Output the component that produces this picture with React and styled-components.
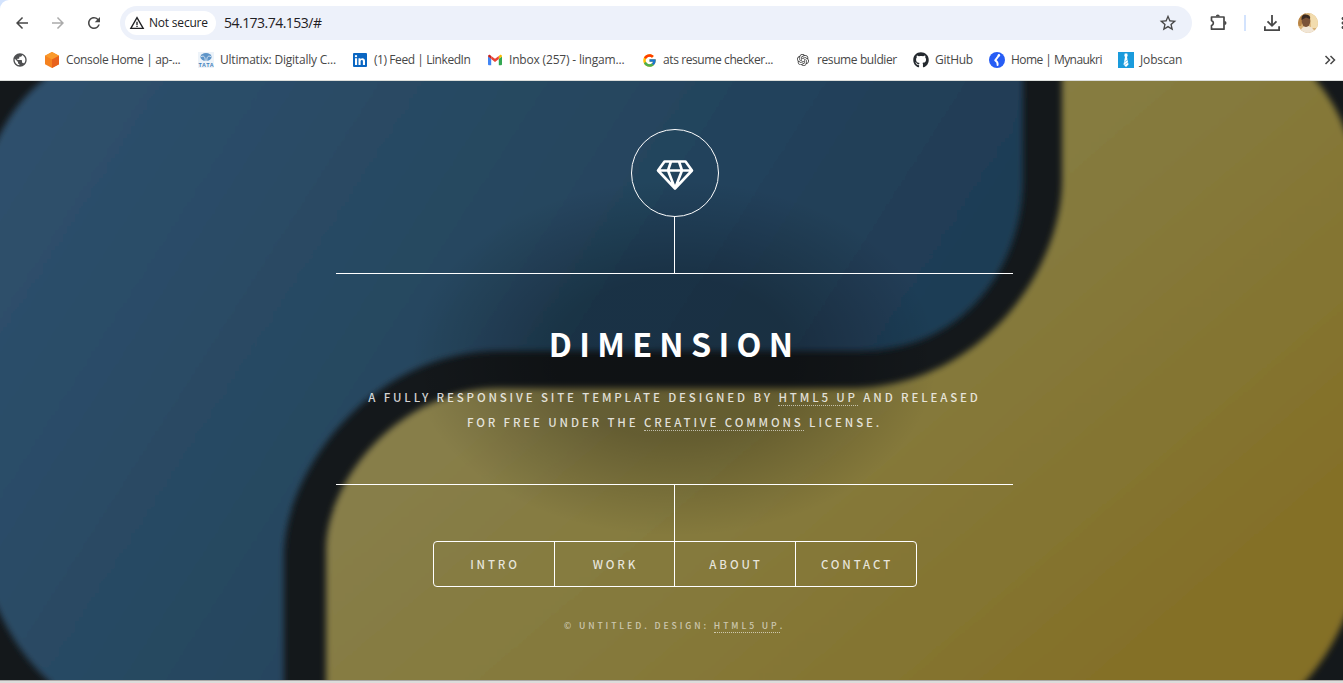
import React from "react";
import styled, { createGlobalStyle } from "styled-components";
import {
  MdArrowBack,
  MdArrowForward,
  MdRefresh,
  MdStarOutline,
  MdMoreVert,
  MdPublic,
  MdWarningAmber,
} from "react-icons/md";
import { FaGithub } from "react-icons/fa";
import { FcGoogle } from "react-icons/fc";
import { SiOpenai } from "react-icons/si";

const GlobalStyle = createGlobalStyle`
  * { box-sizing: border-box; }
  html, body { margin: 0; overflow: hidden; background: #fff; }
  a { color: inherit; text-decoration: none; }
`;

const Window = styled.div`
  width: 1349px;
  height: 683px;
  display: flex;
  flex-direction: column;
  overflow: hidden;
  font-family: "Open Sans", "Noto Sans", sans-serif;
`;

const Chrome = styled.div`
  height: 81px;
  flex: none;
  background: #d3e3fd;
`;

const ChromeSurface = styled.div`
  height: 81px;
  background: #fff;
  border-top-left-radius: 9px;
  border-bottom: 1px solid #dcdedb;
`;

const Toolbar = styled.div`
  height: 40px;
  padding: 6px 0 0 12px;
  display: flex;
  align-items: center;
  color: #474747;
`;

const ToolButton = styled.span`
  display: flex;
  flex: none;
  width: 20px;
  height: 20px;
  align-items: center;
  justify-content: center;
  margin-right: ${(p) => p.$after || 0}px;
  color: ${(p) => (p.$disabled ? "#ababab" : "#474747")};
  font-size: ${(p) => p.$size || 18}px;
`;

const AddressBar = styled.div`
  width: 1072px;
  height: 34px;
  flex: none;
  padding: 0 14px 0 5px;
  border-radius: 17px;
  background: #edf1fa;
  display: flex;
  align-items: center;
  margin-right: 16px;
`;

const SecurityChip = styled.div`
  width: 91px;
  height: 24px;
  padding: 0 0 1px 4px;
  border-radius: 12px;
  background: #fff;
  display: flex;
  align-items: center;
  gap: 4px;
  font-size: 12px;
  font-weight: 500;
  letter-spacing: -0.2px;
  white-space: nowrap;
  color: #202124;
  svg { font-size: 16px; flex: none; }
`;

const Address = styled.span`
  flex: 1;
  margin-left: 8px;
  font-size: 14px;
  line-height: 18px;
  padding-bottom: 1px;
  letter-spacing: -0.52px;
  color: #1f2023;
`;

const ToolDivider = styled.span`
  width: 2px;
  height: 16px;
  flex: none;
  margin-right: 16px;
  background: #d3e3fd;
`;

const Avatar = styled.svg`
  width: 20px;
  height: 20px;
  flex: none;
  margin-right: 15px;
`;

const BookmarkBar = styled.nav`
  height: 40px;
  padding: 0 13px 0 12px;
  display: flex;
  align-items: center;
`;

const Bookmark = styled.a`
  width: ${(p) => p.$width}px;
  flex: none;
  display: flex;
  align-items: center;
  gap: 6px;
  font-size: 12px;
  line-height: 16px;
  letter-spacing: ${(p) => p.$tracking || 0}px;
  white-space: nowrap;
  color: #474747;
`;

const BookmarkIcon = styled.span`
  width: 16px;
  height: 16px;
  flex: none;
  display: flex;
  align-items: center;
  justify-content: center;
`;

const Overflow = styled.svg`
  width: 12px;
  height: 12px;
  margin-left: auto;
`;

const Page = styled.main`
  height: 599px;
  flex: none;
  display: grid;
  font-family: "Noto Sans CJK JP", "Noto Sans", sans-serif;
  color: #fff;
  > * { grid-area: 1 / 1; }
`;

const Backdrop = styled.svg`
  width: 1343px;
  height: 599px;
  display: block;
`;

const Foreground = styled.div`
  z-index: 1;
  padding-top: 48px;
  display: flex;
  flex-direction: column;
  align-items: center;
`;

const Header = styled.header`
  width: 677px;
  height: 458px;
  display: flex;
  flex-direction: column;
  align-items: center;
  background: radial-gradient(rgba(0, 0, 0, 0.25) 25%, rgba(0, 0, 0, 0) 55%);
`;

const Logo = styled.div`
  width: 88px;
  height: 88px;
  flex: none;
  border: 1px solid #fff;
  border-radius: 50%;
  padding-top: 3px;
  display: flex;
  align-items: center;
  justify-content: center;
`;

const Stem = styled.div`
  width: 1px;
  height: 56px;
  flex: none;
  background: #fff;
`;

const Content = styled.div`
  width: 677px;
  height: 212px;
  flex: none;
  border: solid #fff;
  border-width: 1px 0;
  padding-top: 45px;
  text-align: center;
`;

const Title = styled.h1`
  margin: 0 0 19px;
  font-size: 32.4px;
  line-height: 47px;
  font-weight: 700;
  letter-spacing: 7.3px;
`;

const Tagline = styled.p`
  margin: 0;
  font-size: 11.5px;
  font-weight: 500;
  line-height: 25px;
  letter-spacing: 2.86px;
  color: rgba(255, 255, 255, 0.82);
`;

const DottedLink = styled.a`
  display: inline-block;
  line-height: 15px;
  border-bottom: 1px dotted rgba(255, 255, 255, 0.6);
`;

const Nav = styled.nav`
  width: 484px;
  height: 46px;
  flex: none;
  display: grid;
  grid-template-columns: 120px 120px 121px 121px;
  border: 1px solid #fff;
  border-radius: 4px;
`;

const NavItem = styled.a`
  display: flex;
  align-items: center;
  justify-content: center;
  padding-left: 3px;
  font-size: 11.5px;
  font-weight: 500;
  line-height: 44px;
  letter-spacing: 2.9px;
  color: rgba(255, 255, 255, 0.82);
  & + & { border-left: 1px solid #fff; }
`;

const Footer = styled.footer`
  margin-top: 28px;
  font-size: 8.65px;
  font-weight: 500;
  line-height: 20px;
  letter-spacing: 2.92px;
  color: rgba(255, 255, 255, 0.6);
`;

const FooterLink = styled(DottedLink)`
  line-height: 13px;
`;

const StatusEdge = styled.div`
  height: 3px;
  flex: none;
  border-top: 1px solid #aaa9a8;
  background: #dcdcda;
`;

const ExtensionIcon = () => (
  <svg width="20" height="20" viewBox="0 0 20 20">
    <path
      d="M3.5 4H16V16.2H3.5V12.6A2.6 2.6 0 0 0 3.5 7.6Z"
      fill="none"
      stroke="#474747"
      strokeWidth="1.7"
      strokeLinejoin="round"
    />
    <path d="M7.8 3.5A2 2 0 0 1 11.8 3.5ZM16.5 8.1A2 2 0 0 1 16.5 12.1Z" fill="#474747" />
  </svg>
);

const DownloadIcon = () => (
  <svg width="20" height="20" viewBox="0 0 20 20">
    <path d="M10 2V12.5M5.5 8.3 10 12.8 14.5 8.3M2.9 13.3V17.1H17.1V13.3" fill="none" stroke="#474747" strokeWidth="1.8" />
  </svg>
);

const AwsIcon = () => (
  <svg width="16" height="16" viewBox="0 0 16 16">
    <path d="M8 0 15 3.7V12.3L8 16 1 12.3V3.7Z" fill="#f58220" />
    <path d="M8 0 15 3.7 8 7.4 1 3.7Z" fill="#fa9a2c" />
    <path d="M15 3.7V12.3L8 16V7.4Z" fill="#e8611c" />
  </svg>
);

const TataIcon = () => (
  <svg width="16" height="16" viewBox="0 0 16 16">
    <rect width="16" height="16" fill="#edf3f9" />
    <ellipse cx="8" cy="5" rx="5.6" ry="4" fill="#5d94c8" />
    <path d="M3 4.6C6 3.4 7.2 4.6 7.2 9M13 4.6C10 3.4 8.8 4.6 8.8 9" fill="none" stroke="#edf3f9" strokeWidth="0.8" />
    <text x="0.6" y="14.8" fontFamily="Liberation Sans" fontSize="5.4" fontWeight="700" textLength="14.8" fill="#3f7fba">TATA</text>
  </svg>
);

const LinkedInIcon = () => (
  <svg width="14" height="14" viewBox="0 0 14 14">
    <rect width="14" height="14" rx="1" fill="#0a66c2" />
    <path d="M2 5.3H4.1V12H2Z M5.5 5.3H7.5V6.2C8.6 4.6 12 4.8 12 8V12H9.9V8.4C9.9 6.3 7.6 6.5 7.6 8.4V12H5.5Z" fill="#fff" />
    <circle cx="3" cy="3.1" r="1.2" fill="#fff" />
  </svg>
);

const GmailIcon = () => (
  <svg width="16" height="16" viewBox="0 0 16 16">
    <path d="M1 4.5V12.2Q1 13.3 2 13.3H4.2V6.8Z" fill="#4285f4" />
    <path d="M15 4.5V12.2Q15 13.3 14 13.3H11.8V6.8Z" fill="#34a853" />
    <path d="M11.8 3.9V7L15 4.6Q15 2.3 13.2 2.8Z" fill="#fbbc04" />
    <path d="M4.2 3.9V7L1 4.6Q1 2.3 2.8 2.8Z" fill="#c5221f" />
    <path d="M4.2 3.9 8 6.8 11.8 3.9V7L8 10 4.2 7Z" fill="#ea4335" />
  </svg>
);

const NaukriIcon = () => (
  <svg width="16" height="16" viewBox="0 0 16 16">
    <circle cx="8" cy="8" r="8" fill="#275df5" />
    <circle cx="9.9" cy="3.2" r="1.2" fill="#fff" />
    <path d="M9.8 3.6 6.2 8.3Q9 9.6 8.6 13" fill="none" stroke="#fff" strokeWidth="1.9" strokeLinejoin="round" strokeLinecap="round" />
  </svg>
);

const JobscanIcon = () => (
  <svg width="16" height="16" viewBox="0 0 16 16">
    <rect width="16" height="16" fill="#1a9bdc" />
    <path d="M6.7 1.5H9.3L9.7 4 8.9 5.1H7.1L6.3 4Z M7 5H9L10.5 12.4 8 15 5.5 12.4Z" fill="#fff" />
    <path d="M6.2 10.2 9.8 7.6M6.3 13 10.2 10.2" stroke="#1a9bdc" strokeWidth="0.5" />
  </svg>
);

const BOOKMARKS = [
  { width: 32, icon: <MdPublic size={18} color="#4f5052" /> },
  { width: 154, icon: <AwsIcon />, label: "Console Home | ap-...", tracking: -0.37 },
  { width: 154, icon: <TataIcon />, label: "Ultimatix: Digitally C...", tracking: -0.21 },
  { width: 135, icon: <LinkedInIcon />, label: "(1) Feed | LinkedIn", tracking: -0.43 },
  { width: 154, icon: <GmailIcon />, label: "Inbox (257) - lingam...", tracking: -0.18 },
  { width: 154, icon: <FcGoogle size={15} />, label: "ats resume checker...", tracking: -0.4 },
  { width: 118, icon: <SiOpenai size={12} color="#3c3c3c" />, label: "resume buldier", tracking: -0.4 },
  { width: 76, icon: <FaGithub size={16} color="#24292f" />, label: "GitHub", tracking: -0.3 },
  { width: 129, icon: <NaukriIcon />, label: "Home | Mynaukri", tracking: -0.55 },
  { width: 70, icon: <JobscanIcon />, label: "Jobscan", tracking: -0.15 },
];

const NAV = ["INTRO", "WORK", "ABOUT", "CONTACT"];

function BackdropArt() {
  return (
    <Backdrop viewBox="0 81 1343 599" preserveAspectRatio="none">
      <defs>
        <linearGradient id="blue" gradientUnits="userSpaceOnUse" x1="60" y1="100" x2="780" y2="560">
          <stop offset="0" stopColor="#2e506c" />
          <stop offset="0.45" stopColor="#274861" />
          <stop offset="1" stopColor="#1f3c55" />
        </linearGradient>
        <linearGradient id="gold" gradientUnits="userSpaceOnUse" x1="720" y1="220" x2="1130" y2="700">
          <stop offset="0" stopColor="#877e48" />
          <stop offset="0.45" stopColor="#85793a" />
          <stop offset="1" stopColor="#846f26" />
        </linearGradient>
        <filter id="soften" filterUnits="userSpaceOnUse" x="-60" y="20" width="1460" height="720">
          <feGaussianBlur stdDeviation="3.4" />
        </filter>
      </defs>
      <rect y="81" width="1343" height="599" fill="#14181b" />
      <g filter="url(#soften)">
        <path
          fill="url(#blue)"
          d="M46 78Q16 100 -4 142L-50 230V510L-4 605Q18 655 52 684V760H284V557C284 470 372 351 500 351H860C965 351 1023 265 1023 180V0H46Z"
        />
        <path
          fill="url(#gold)"
          d="M1062 0V180C1062 270 980 388 850 388H500C400 388 326 480 326 550V760H1303V684Q1330 655 1347 613L1393 510V230L1347 135Q1336 103 1314 78V0Z"
        />
      </g>
    </Backdrop>
  );
}

export default function App() {
  return (
    <Window>
      <GlobalStyle />
      <Chrome>
        <ChromeSurface>
          <Toolbar>
            <ToolButton $after={16}><MdArrowBack /></ToolButton>
            <ToolButton $after={16} $disabled><MdArrowForward /></ToolButton>
            <ToolButton $after={16}><MdRefresh /></ToolButton>
            <AddressBar>
              <SecurityChip><MdWarningAmber />Not secure</SecurityChip>
              <Address>54.173.74.153/#</Address>
              <ToolButton $size={20}><MdStarOutline /></ToolButton>
            </AddressBar>
            <ToolButton $after={16}><ExtensionIcon /></ToolButton>
            <ToolDivider />
            <ToolButton $after={16}><DownloadIcon /></ToolButton>
            <Avatar viewBox="0 0 20 20">
              <clipPath id="face"><circle cx="10" cy="10" r="10" /></clipPath>
              <g clipPath="url(#face)">
                <rect width="20" height="20" fill="#d9b277" />
                <path d="M12 0H20V15H13Z" fill="#f2dcae" />
                <path d="M0 0H8L3 13H0Z" fill="#b98547" />
                <path d="M2 20Q3 13 9 13T17 20Z" fill="#f1e6d6" />
                <ellipse cx="8" cy="8" rx="4.3" ry="6" fill="#7a5237" />
                <path d="M3.5 7Q3 1 8 1.5T12 6L8 4.5Z" fill="#3a2a22" />
              </g>
            </Avatar>
            <ToolButton><MdMoreVert /></ToolButton>
          </Toolbar>
          <BookmarkBar>
            {BOOKMARKS.map((b, i) => (
              <Bookmark key={i} $width={b.width} $tracking={b.tracking}>
                <BookmarkIcon>{b.icon}</BookmarkIcon>
                {b.label}
              </Bookmark>
            ))}
            <Overflow viewBox="0 0 12 12">
              <path d="M1.5 2 5.5 6 1.5 10M6.5 2 10.5 6 6.5 10" fill="none" stroke="#474747" strokeWidth="1.5" />
            </Overflow>
          </BookmarkBar>
        </ChromeSurface>
      </Chrome>
      <Page>
        <BackdropArt />
        <Foreground>
          <Header>
            <Logo>
              <svg width="38" height="32" viewBox="0 0 38 32">
                <path
                  d="M8.5 2.5H29.5L36 11.5 19 29.5 2 11.5ZM2 11.5H36M15 2.5 12 11.5 19 29.5 26 11.5 23 2.5"
                  fill="none"
                  stroke="#fff"
                  strokeWidth="2.6"
                  strokeLinejoin="round"
                />
              </svg>
            </Logo>
            <Stem />
            <Content>
              <Title>DIMENSION</Title>
              <Tagline>
                A FULLY RESPONSIVE SITE TEMPLATE DESIGNED BY <DottedLink>HTML5 UP</DottedLink> AND RELEASED
                <br />
                FOR FREE UNDER THE <DottedLink>CREATIVE COMMONS</DottedLink> LICENSE.
              </Tagline>
            </Content>
            <Stem />
            <Nav>
              {NAV.map((item) => (
                <NavItem key={item}>{item}</NavItem>
              ))}
            </Nav>
          </Header>
          <Footer>
            © UNTITLED. DESIGN: <FooterLink>HTML5 UP</FooterLink>.
          </Footer>
        </Foreground>
      </Page>
      <StatusEdge />
    </Window>
  );
}
